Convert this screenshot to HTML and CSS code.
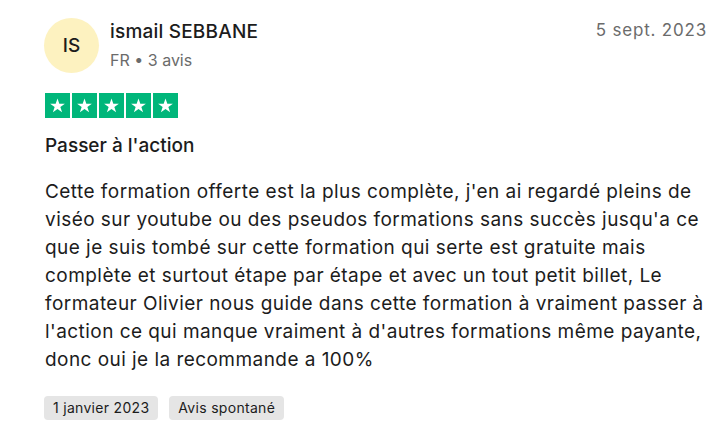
FILE: index.html
```html
<!DOCTYPE html>
<html lang="fr">
<head>
<meta charset="utf-8">
<link rel="stylesheet" href="styles.css">
</head>
<body>
<article class="review">
  <header class="head">
    <div class="avatar">IS</div>
    <div class="who">
      <div class="name">ismail SEBBANE</div>
      <div class="meta">FR • 3 avis</div>
    </div>
    <time class="date">5 sept. 2023</time>
  </header>
  <div class="stars">
    <span class="star"><svg viewBox="0 0 24 24"><path d="M12 3.2l2.3 6.6h7l-5.7 4.1 2.2 6.7L12 16.5l-5.8 4.1 2.2-6.7-5.7-4.1h7z"/></svg></span>
    <span class="star"><svg viewBox="0 0 24 24"><path d="M12 3.2l2.3 6.6h7l-5.7 4.1 2.2 6.7L12 16.5l-5.8 4.1 2.2-6.7-5.7-4.1h7z"/></svg></span>
    <span class="star"><svg viewBox="0 0 24 24"><path d="M12 3.2l2.3 6.6h7l-5.7 4.1 2.2 6.7L12 16.5l-5.8 4.1 2.2-6.7-5.7-4.1h7z"/></svg></span>
    <span class="star"><svg viewBox="0 0 24 24"><path d="M12 3.2l2.3 6.6h7l-5.7 4.1 2.2 6.7L12 16.5l-5.8 4.1 2.2-6.7-5.7-4.1h7z"/></svg></span>
    <span class="star"><svg viewBox="0 0 24 24"><path d="M12 3.2l2.3 6.6h7l-5.7 4.1 2.2 6.7L12 16.5l-5.8 4.1 2.2-6.7-5.7-4.1h7z"/></svg></span>
  </div>
  <h2 class="title">Passer à l'action</h2>
  <p class="text">Cette formation offerte est la plus complète, j'en ai regardé pleins de viséo sur youtube ou des pseudos formations sans succès jusqu'a ce que je suis tombé sur cette formation qui serte est gratuite mais complète et surtout étape par étape et avec un tout petit billet, Le formateur Olivier nous guide dans cette formation à vraiment passer à l'action ce qui manque vraiment à d'autres formations même payante, donc oui je la recommande a 100%</p>
  <div class="tags">
    <span class="tag">1 janvier 2023</span>
    <span class="tag">Avis spontané</span>
  </div>
</article>
</body>
</html>
```
FILE: styles.css
```css
html, body {
  margin: 0;
  padding: 0;
  background: #fff;
}
body {
  font-family: Inter, "Liberation Sans", sans-serif;
  color: #1c1c1c;
}
.review {
  padding: 18px 18px 0 44px;
}
.head {
  display: flex;
  align-items: flex-start;
}
.avatar {
  width: 55px;
  height: 55px;
  border-radius: 50%;
  background: #fdf2c0;
  display: flex;
  align-items: center;
  justify-content: center;
  font-size: 19px;
  font-weight: 500;
  color: #1c1c1c;
  flex: none;
  margin-right: 11px;
}
.who {
  flex: 1;
  padding-top: 2px;
}
.name {
  font-size: 19px;
  font-weight: 500;
  letter-spacing: 0.2px;
  line-height: 24px;
}
.meta {
  font-size: 16px;
  line-height: 22px;
  color: #6b6b6b;
  margin-top: 5px;
}
.date {
  font-size: 17px;
  letter-spacing: 0.8px;
  color: #6b6b6b;
  line-height: 24px;
}
.stars {
  display: flex;
  gap: 2px;
  margin-top: 20px;
  margin-left: 1px;
}
.star {
  width: 25px;
  height: 25px;
  background: #00b67a;
  display: flex;
  align-items: center;
  justify-content: center;
}
.star svg {
  width: 19px;
  height: 19px;
  fill: #fff;
}
.title {
  margin: 16px 0 0 1px;
  font-size: 19px;
  font-weight: 500;
  line-height: 24px;
}
.text {
  margin: 20px 0 0 1px;
  font-size: 19px;
  letter-spacing: 0.45px;
  line-height: 28px;
}
.tags {
  display: flex;
  gap: 11px;
  margin-top: 22px;
}
.tag {
  background: #e5e5e5;
  border-radius: 4px;
  font-size: 14px;
  letter-spacing: 0.3px;
  line-height: 24px;
  padding: 0 9px;
  color: #1c1c1c;
}
```
